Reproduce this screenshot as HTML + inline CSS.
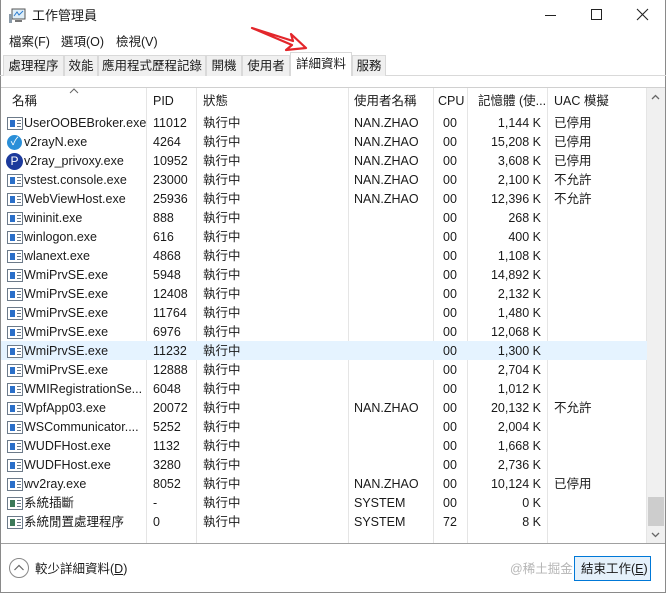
<!DOCTYPE html>
<html><head><meta charset="utf-8"><style>
*{margin:0;padding:0;box-sizing:border-box}
body{width:666px;height:593px;background:#fff;font-family:"Liberation Sans","Noto Sans CJK TC",sans-serif;font-size:12.5px;color:#1a1a1a;position:relative;overflow:hidden}
.a{position:absolute;white-space:nowrap;line-height:16px}
.tab{position:absolute;top:55px;height:21px;background:#f0f0f0;border:1px solid #d9d9d9;border-bottom:none;font-size:12.5px;line-height:20px;text-align:center}
.row{position:absolute;left:1px;width:646px;height:19px;line-height:19px}
.row span{position:absolute;top:1px;line-height:19px}
.ic{position:absolute;left:6px;top:4px;width:16px;height:13px;border:1px solid #6c7a89;background:#fff}
.ic::before{content:"";position:absolute;left:2px;top:2px;width:5px;height:7px;background:#2a6fc9}
.ic::after{content:"";position:absolute;left:9px;top:2px;width:4px;height:7px;background:repeating-linear-gradient(#6c7a89 0 1px,transparent 1px 3px)}
.sys::before{background:#3d7a5a}
.vl{position:absolute;top:88px;width:1px;height:455px;background:#e5e5e5}
</style></head><body>
<div class="a" style="left:0;top:0;width:666px;height:593px;border:1px solid #8a8a8a;border-top:none"></div>
<svg class="a" style="left:8px;top:8px" width="18" height="16"><rect x="4" y="1" width="13" height="10" fill="#dfeef8" stroke="#555"/><polyline points="6,8 9,4 11,7 15,3" fill="none" stroke="#2a7bd0"/><rect x="1" y="6" width="3" height="9" fill="#8a9aa8"/><rect x="7" y="12" width="7" height="2" fill="#777"/></svg>
<div class="a" style="left:32px;top:8px;font-size:13px">工作管理員</div>
<div class="a" style="left:545px;top:15px;width:11px;height:1px;background:#222"></div>
<div class="a" style="left:591px;top:9px;width:11px;height:11px;border:1px solid #222"></div>
<svg class="a" style="left:636px;top:8px" width="13" height="13"><path d="M1 1L12 12M12 1L1 12" stroke="#222" stroke-width="1.1"/></svg>
<div class="a" style="left:9px;top:34px">檔案(F)</div>
<div class="a" style="left:61px;top:34px">選項(O)</div>
<div class="a" style="left:116px;top:34px">檢視(V)</div>
<svg class="a" style="left:248px;top:24px" width="62" height="30"><path d="M4 4L45 17L43 10L58 24L38 26L44 21L4 4Z" fill="#fff" stroke="#e3262b" stroke-width="2.2" stroke-linejoin="round"/></svg>
<div class="a" style="left:0;top:75px;width:666px;height:1px;background:#d9d9d9"></div>
<div class="tab" style="left:3px;width:61px">處理程序</div>
<div class="tab" style="left:64px;width:34px">效能</div>
<div class="tab" style="left:98px;width:108px">應用程式歷程記錄</div>
<div class="tab" style="left:206px;width:36px">開機</div>
<div class="tab" style="left:242px;width:48px">使用者</div>
<div class="tab" style="left:290px;width:62px;top:52px;height:24px;background:#fff;line-height:22px">詳細資料</div>
<div class="tab" style="left:352px;width:34px">服務</div>
<div class="a" style="left:1px;top:87px;width:664px;height:1px;background:#d0d0d0"></div>
<div class="vl" style="left:146px"></div><div class="vl" style="left:196px"></div><div class="vl" style="left:348px"></div><div class="vl" style="left:433px"></div><div class="vl" style="left:467px"></div><div class="vl" style="left:547px"></div><div class="vl" style="left:646px"></div>
<svg class="a" style="left:69px;top:88px" width="10" height="6"><path d="M1 5L5 1L9 5" fill="none" stroke="#666"/></svg>
<div class="a" style="left:12px;top:93px">名稱</div>
<div class="a" style="left:153px;top:93px">PID</div>
<div class="a" style="left:203px;top:93px">狀態</div>
<div class="a" style="left:354px;top:93px">使用者名稱</div>
<div class="a" style="left:438px;top:93px">CPU</div>
<div class="a" style="left:478px;top:93px">記憶體 (使...</div>
<div class="a" style="left:554px;top:93px">UAC 模擬</div>
<div class="a" style="left:647px;top:88px;width:18px;height:455px;background:#f0f0f0"></div>
<svg class="a" style="left:651px;top:94px" width="9" height="6"><path d="M1 5L4.5 1.5L8 5" fill="none" stroke="#666" stroke-width="1.3"/></svg>
<div class="a" style="left:648px;top:497px;width:16px;height:29px;background:#cdcdcd"></div>
<svg class="a" style="left:651px;top:532px" width="9" height="6"><path d="M1 1L4.5 4.5L8 1" fill="none" stroke="#666" stroke-width="1.3"/></svg>
<div class="a" style="left:1px;top:341px;width:646px;height:19px;background:#e5f3ff"></div>

<div class="row" style="top:113px"><i class="ic"></i><span style="left:23px">UserOOBEBroker.exe</span><span style="left:152px">11012</span><span style="left:202px">執行中</span><span style="left:353px">NAN.ZHAO</span><span style="left:442px">00</span><span style="right:106px">1,144 K</span><span style="left:553px">已停用</span></div>
<div class="row" style="top:132px"><i class="a" style="left:6px;top:3px;width:15px;height:15px;border-radius:50%;background:#2a8fd8;color:#fff;font-size:11px;line-height:15px;text-align:center;font-style:normal">✓</i><span style="left:23px">v2rayN.exe</span><span style="left:152px">4264</span><span style="left:202px">執行中</span><span style="left:353px">NAN.ZHAO</span><span style="left:442px">00</span><span style="right:106px">15,208 K</span><span style="left:553px">已停用</span></div>
<div class="row" style="top:151px"><i class="a" style="left:5px;top:2px;width:17px;height:17px;border-radius:50%;background:#1c3a9c;color:#fff;font-size:12px;line-height:17px;text-align:center;font-style:normal">P</i><span style="left:23px">v2ray_privoxy.exe</span><span style="left:152px">10952</span><span style="left:202px">執行中</span><span style="left:353px">NAN.ZHAO</span><span style="left:442px">00</span><span style="right:106px">3,608 K</span><span style="left:553px">已停用</span></div>
<div class="row" style="top:170px"><i class="ic"></i><span style="left:23px">vstest.console.exe</span><span style="left:152px">23000</span><span style="left:202px">執行中</span><span style="left:353px">NAN.ZHAO</span><span style="left:442px">00</span><span style="right:106px">2,100 K</span><span style="left:553px">不允許</span></div>
<div class="row" style="top:189px"><i class="ic"></i><span style="left:23px">WebViewHost.exe</span><span style="left:152px">25936</span><span style="left:202px">執行中</span><span style="left:353px">NAN.ZHAO</span><span style="left:442px">00</span><span style="right:106px">12,396 K</span><span style="left:553px">不允許</span></div>
<div class="row" style="top:208px"><i class="ic"></i><span style="left:23px">wininit.exe</span><span style="left:152px">888</span><span style="left:202px">執行中</span><span style="left:442px">00</span><span style="right:106px">268 K</span></div>
<div class="row" style="top:227px"><i class="ic"></i><span style="left:23px">winlogon.exe</span><span style="left:152px">616</span><span style="left:202px">執行中</span><span style="left:442px">00</span><span style="right:106px">400 K</span></div>
<div class="row" style="top:246px"><i class="ic"></i><span style="left:23px">wlanext.exe</span><span style="left:152px">4868</span><span style="left:202px">執行中</span><span style="left:442px">00</span><span style="right:106px">1,108 K</span></div>
<div class="row" style="top:265px"><i class="ic"></i><span style="left:23px">WmiPrvSE.exe</span><span style="left:152px">5948</span><span style="left:202px">執行中</span><span style="left:442px">00</span><span style="right:106px">14,892 K</span></div>
<div class="row" style="top:284px"><i class="ic"></i><span style="left:23px">WmiPrvSE.exe</span><span style="left:152px">12408</span><span style="left:202px">執行中</span><span style="left:442px">00</span><span style="right:106px">2,132 K</span></div>
<div class="row" style="top:303px"><i class="ic"></i><span style="left:23px">WmiPrvSE.exe</span><span style="left:152px">11764</span><span style="left:202px">執行中</span><span style="left:442px">00</span><span style="right:106px">1,480 K</span></div>
<div class="row" style="top:322px"><i class="ic"></i><span style="left:23px">WmiPrvSE.exe</span><span style="left:152px">6976</span><span style="left:202px">執行中</span><span style="left:442px">00</span><span style="right:106px">12,068 K</span></div>
<div class="row" style="top:341px"><i class="ic"></i><span style="left:23px">WmiPrvSE.exe</span><span style="left:152px">11232</span><span style="left:202px">執行中</span><span style="left:442px">00</span><span style="right:106px">1,300 K</span></div>
<div class="row" style="top:360px"><i class="ic"></i><span style="left:23px">WmiPrvSE.exe</span><span style="left:152px">12888</span><span style="left:202px">執行中</span><span style="left:442px">00</span><span style="right:106px">2,704 K</span></div>
<div class="row" style="top:379px"><i class="ic"></i><span style="left:23px">WMIRegistrationSe...</span><span style="left:152px">6048</span><span style="left:202px">執行中</span><span style="left:442px">00</span><span style="right:106px">1,012 K</span></div>
<div class="row" style="top:398px"><i class="ic"></i><span style="left:23px">WpfApp03.exe</span><span style="left:152px">20072</span><span style="left:202px">執行中</span><span style="left:353px">NAN.ZHAO</span><span style="left:442px">00</span><span style="right:106px">20,132 K</span><span style="left:553px">不允許</span></div>
<div class="row" style="top:417px"><i class="ic"></i><span style="left:23px">WSCommunicator....</span><span style="left:152px">5252</span><span style="left:202px">執行中</span><span style="left:442px">00</span><span style="right:106px">2,004 K</span></div>
<div class="row" style="top:436px"><i class="ic"></i><span style="left:23px">WUDFHost.exe</span><span style="left:152px">1132</span><span style="left:202px">執行中</span><span style="left:442px">00</span><span style="right:106px">1,668 K</span></div>
<div class="row" style="top:455px"><i class="ic"></i><span style="left:23px">WUDFHost.exe</span><span style="left:152px">3280</span><span style="left:202px">執行中</span><span style="left:442px">00</span><span style="right:106px">2,736 K</span></div>
<div class="row" style="top:474px"><i class="ic"></i><span style="left:23px">wv2ray.exe</span><span style="left:152px">8052</span><span style="left:202px">執行中</span><span style="left:353px">NAN.ZHAO</span><span style="left:442px">00</span><span style="right:106px">10,124 K</span><span style="left:553px">已停用</span></div>
<div class="row" style="top:493px"><i class="ic sys"></i><span style="left:23px">系統插斷</span><span style="left:152px">-</span><span style="left:202px">執行中</span><span style="left:353px">SYSTEM</span><span style="left:442px">00</span><span style="right:106px">0 K</span></div>
<div class="row" style="top:512px"><i class="ic sys"></i><span style="left:23px">系統閒置處理程序</span><span style="left:152px">0</span><span style="left:202px">執行中</span><span style="left:353px">SYSTEM</span><span style="left:442px">72</span><span style="right:106px">8 K</span></div>

<div class="a" style="left:1px;top:543px;width:664px;height:1px;background:#a0a0a0"></div>
<svg class="a" style="left:8px;top:557px" width="22" height="22"><circle cx="11" cy="11" r="9.5" fill="none" stroke="#888"/><path d="M6.5 13L11 8.5L15.5 13" fill="none" stroke="#666" stroke-width="1.2"/></svg>
<div class="a" style="left:35px;top:561px">較少詳細資料(<u>D</u>)</div>
<div class="a" style="left:574px;top:556px;width:77px;height:25px;border:1px solid #0078d7;background:#e5f1fb"></div>
<div class="a" style="left:510px;top:561px;color:#b5b5b5">@稀土掘金</div>
<div class="a" style="left:581px;top:561px">結束工作(<u>E</u>)</div>
</body></html>
